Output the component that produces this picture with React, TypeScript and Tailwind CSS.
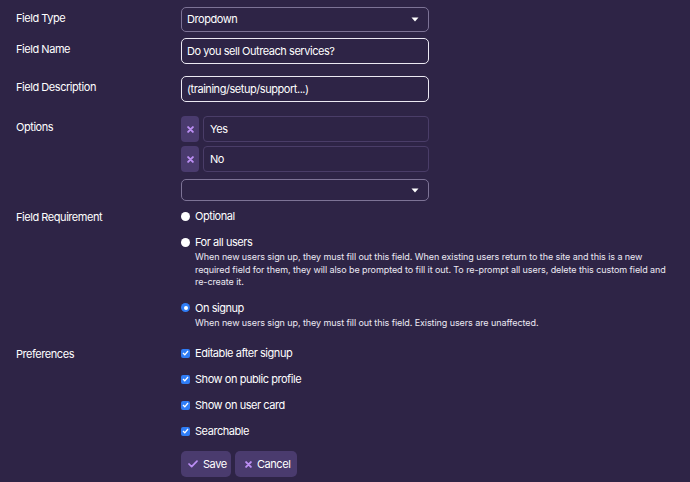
import React from "react";

const font = { fontFamily: "Inter, 'Liberation Sans', sans-serif" };

function Caret() {
  return (
    <svg width="8" height="5" viewBox="0 0 8 5" className="shrink-0">
      <path d="M0.5 0.5 L7.5 0.5 L4 4.5 Z" fill="#ffffff" />
    </svg>
  );
}

function XIcon({ size = 7 }: { size?: number }) {
  return (
    <svg width={size} height={size} viewBox="0 0 8 8">
      <path d="M1.3 1.3 L6.7 6.7 M6.7 1.3 L1.3 6.7" stroke="#bb8ef4" strokeWidth="2.2" strokeLinecap="round" />
    </svg>
  );
}

function CheckIcon() {
  return (
    <svg width="10" height="8" viewBox="0 0 11 9">
      <path d="M1 4.5 L4 7.5 L10 1.2" stroke="#bb8ef4" strokeWidth="1.9" fill="none" strokeLinecap="round" strokeLinejoin="round" />
    </svg>
  );
}

function Row({ label, className = "", children }: { label: string; className?: string; children: React.ReactNode }) {
  return (
    <div className={`flex ${className}`}>
      <div className="w-[165px] shrink-0 pt-px text-[11px] leading-5 tracking-[-0.45px]">{label}</div>
      <div className="w-[248px]">{children}</div>
    </div>
  );
}

function Radio({ checked }: { checked?: boolean }) {
  return checked ? (
    <span className="mt-[5.5px] h-[9px] w-[9px] shrink-0 rounded-full bg-[#2f7df6] flex items-center justify-center">
      <span className="h-[4px] w-[4px] rounded-full bg-white" />
    </span>
  ) : (
    <span className="mt-[5.5px] h-[9px] w-[9px] shrink-0 rounded-full bg-white" />
  );
}

function Check() {
  return (
    <span className="h-[9px] w-[9px] shrink-0 rounded-[2px] bg-[#2f7df6] flex items-center justify-center">
      <svg width="7" height="6" viewBox="0 0 7 6">
        <path d="M1 3 L2.8 4.8 L6 1" stroke="#fff" strokeWidth="1.3" fill="none" />
      </svg>
    </span>
  );
}

export default function App() {
  const prefs = ["Editable after signup", "Show on public profile", "Show on user card", "Searchable"];
  return (
    <div className="min-h-screen w-full bg-[#2e2446] text-white px-4 pt-[7px]" style={font}>
      <Row label="Field Type">
        <div className="h-[25px] rounded-[5px] border border-[#7d7396] flex items-center justify-between pl-[5px] pr-[9px] text-[11px] tracking-[-0.45px]">
          <span>Dropdown</span>
          <Caret />
        </div>
      </Row>

      <Row label="Field Name" className="mt-[6px]">
        <div className="h-[26px] rounded-[5px] border-[1.5px] border-[#ece9f3] flex items-center px-[5px] text-[11px] tracking-[-0.45px]">
          Do you sell Outreach services?
        </div>
      </Row>

      <Row label="Field Description" className="mt-[12px]">
        <div className="h-[26px] rounded-[5px] border-[1.5px] border-[#ece9f3] flex items-center px-[5px] text-[11px] tracking-[-0.45px]">
          (training/setup/support...)
        </div>
      </Row>

      <Row label="Options" className="mt-[14px]">
        <div className="flex flex-col gap-[4px]">
          {["Yes", "No"].map((o) => (
            <div key={o} className="flex gap-[4px] h-[26px]">
              <button className="w-[18px] rounded-[4px] bg-[#4a3b6e] flex items-center justify-center">
                <XIcon size={7} />
              </button>
              <div className="flex-1 rounded-[4px] border border-[#4a3d68] flex items-center px-[6px] text-[11px] tracking-[-0.45px]">{o}</div>
            </div>
          ))}
          <div className="mt-[3px] h-[22px] rounded-[5px] border border-[#7d7396] flex items-center justify-end pr-[9px]">
            <Caret />
          </div>
        </div>
      </Row>

      <Row label="Field Requirement" className="mt-[5px]">
        <div className="text-[11px] tracking-[-0.45px]">
          <div className="flex gap-[5px] leading-5">
            <Radio />
            <span>Optional</span>
          </div>
          <div className="mt-[6px] flex gap-[5px]">
            <Radio />
            <div>
              <div className="leading-5">For all users</div>
              <p className="-mt-px w-[477px] text-[9px] leading-[12.5px] tracking-[-0.08px] text-[#ece9f3]">
                When new users sign up, they must fill out this field. When existing users return to the site and this is a new required field for them, they will also be prompted to fill it out. To re-prompt all users, delete this custom field and re-create it.
              </p>
            </div>
          </div>
          <div className="mt-[9px] flex gap-[5px]">
            <Radio checked />
            <div>
              <div className="leading-5">On signup</div>
              <p className="-mt-px w-[477px] text-[9px] leading-[12.5px] tracking-[-0.08px] text-[#ece9f3]">
                When new users sign up, they must fill out this field. Existing users are unaffected.
              </p>
            </div>
          </div>
        </div>
      </Row>

      <Row label="Preferences" className="mt-[14px]">
        <div className="flex flex-col gap-[6px] text-[11px] tracking-[-0.45px]">
          {prefs.map((p) => (
            <div key={p} className="flex items-center gap-[5px] h-5">
              <Check />
              <span>{p}</span>
            </div>
          ))}
          <div className="mt-[4px] flex gap-[4px]">
            <button className="h-[26px] w-[50px] pl-[7px] rounded-[5px] bg-[#4a3b6e] flex items-center gap-[5px] text-[11px]">
              <CheckIcon />
              Save
            </button>
            <button className="h-[26px] w-[62px] pl-[10px] rounded-[5px] bg-[#4a3b6e] flex items-center gap-[5px] text-[11px]">
              <XIcon size={7} />
              Cancel
            </button>
          </div>
        </div>
      </Row>
    </div>
  );
}
